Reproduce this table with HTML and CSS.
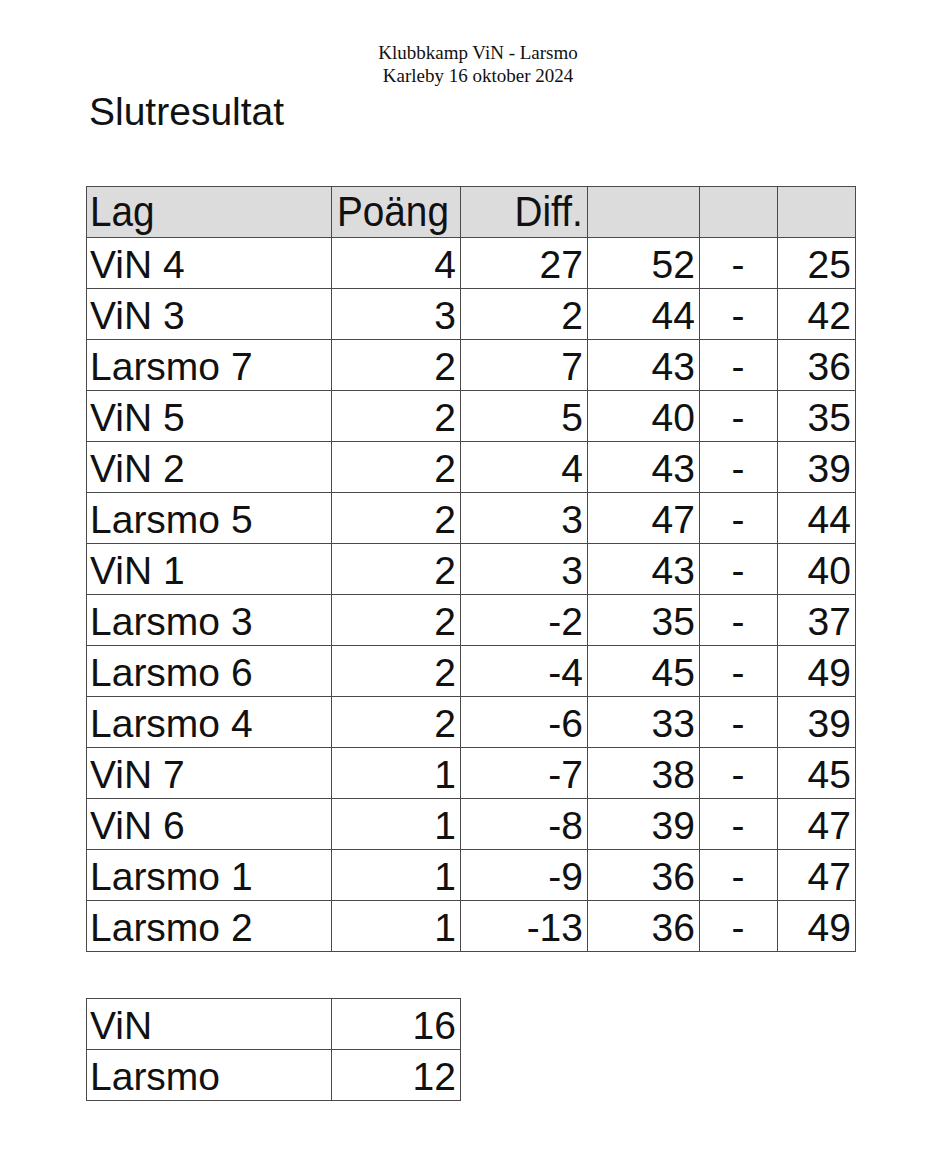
FILE: index.html
```html
<!DOCTYPE html>
<html lang="sv">
<head>
<meta charset="utf-8">
<title>Klubbkamp ViN - Larsmo</title>
<link rel="stylesheet" href="styles.css">
</head>
<body>
<div class="page">
  <header class="doc-head">
    <div class="event">Klubbkamp ViN - Larsmo</div>
    <div class="event">Karleby 16 oktober 2024</div>
  </header>
  <h1 class="title">Slutresultat</h1>

  <table class="results">
    <colgroup>
      <col class="c-lag"><col class="c-p"><col class="c-d"><col class="c-a"><col class="c-s"><col class="c-b">
    </colgroup>
    <thead>
      <tr><th><span class="nar">Lag</span></th><th class="pl"><span class="nar">Poäng</span></th><th class="r"><span class="nar">Diff.</span></th><th></th><th></th><th></th></tr>
    </thead>
    <tbody>
      <tr><td>ViN 4</td><td class="r">4</td><td class="r">27</td><td class="r">52</td><td class="c">-</td><td class="r">25</td></tr>
      <tr><td>ViN 3</td><td class="r">3</td><td class="r">2</td><td class="r">44</td><td class="c">-</td><td class="r">42</td></tr>
      <tr><td>Larsmo 7</td><td class="r">2</td><td class="r">7</td><td class="r">43</td><td class="c">-</td><td class="r">36</td></tr>
      <tr><td>ViN 5</td><td class="r">2</td><td class="r">5</td><td class="r">40</td><td class="c">-</td><td class="r">35</td></tr>
      <tr><td>ViN 2</td><td class="r">2</td><td class="r">4</td><td class="r">43</td><td class="c">-</td><td class="r">39</td></tr>
      <tr><td>Larsmo 5</td><td class="r">2</td><td class="r">3</td><td class="r">47</td><td class="c">-</td><td class="r">44</td></tr>
      <tr><td>ViN 1</td><td class="r">2</td><td class="r">3</td><td class="r">43</td><td class="c">-</td><td class="r">40</td></tr>
      <tr><td>Larsmo 3</td><td class="r">2</td><td class="r">-2</td><td class="r">35</td><td class="c">-</td><td class="r">37</td></tr>
      <tr><td>Larsmo 6</td><td class="r">2</td><td class="r">-4</td><td class="r">45</td><td class="c">-</td><td class="r">49</td></tr>
      <tr><td>Larsmo 4</td><td class="r">2</td><td class="r">-6</td><td class="r">33</td><td class="c">-</td><td class="r">39</td></tr>
      <tr><td>ViN 7</td><td class="r">1</td><td class="r">-7</td><td class="r">38</td><td class="c">-</td><td class="r">45</td></tr>
      <tr><td>ViN 6</td><td class="r">1</td><td class="r">-8</td><td class="r">39</td><td class="c">-</td><td class="r">47</td></tr>
      <tr><td>Larsmo 1</td><td class="r">1</td><td class="r">-9</td><td class="r">36</td><td class="c">-</td><td class="r">47</td></tr>
      <tr><td>Larsmo 2</td><td class="r">1</td><td class="r">-13</td><td class="r">36</td><td class="c">-</td><td class="r">49</td></tr>
    </tbody>
  </table>

  <table class="totals">
    <colgroup><col class="c-lag"><col class="c-p"></colgroup>
    <tbody>
      <tr><td>ViN</td><td class="r">16</td></tr>
      <tr><td>Larsmo</td><td class="r">12</td></tr>
    </tbody>
  </table>
</div>
</body>
</html>
```

FILE: styles.css
```css
html, body {
  margin: 0;
  padding: 0;
  background: #ffffff;
}

.page {
  padding: 41px 0 0 86px;
  color: #111;
}

.doc-head {
  width: 784px;
  text-align: center;
  font-family: "Liberation Serif", "Times New Roman", serif;
  font-size: 19px;
  line-height: 23px;
}

.title {
  margin: 2px 0 0 3px;
  font-family: "Liberation Sans", Arial, sans-serif;
  font-weight: normal;
  font-size: 39px;
  line-height: 46px;
}

table {
  border-collapse: collapse;
  font-family: "Liberation Sans", Arial, sans-serif;
  font-size: 39px;
  table-layout: fixed;
}

.results {
  margin-top: 51px;
  width: 770px;
}

.totals {
  margin-top: 46px;
  width: 375px;
}

.c-lag { width: 245px; }
.c-p { width: 129px; }
.c-d { width: 127px; }
.c-a { width: 112px; }
.c-s { width: 78px; }
.c-b { width: 78px; }

th, td {
  border: 1px solid #4a4a4a;
  height: 51px;
  padding: 0 4px 1px 3px;
  box-sizing: border-box;
  white-space: nowrap;
  overflow: hidden;
  line-height: 44px;
  vertical-align: bottom;
  text-align: left;
}

th {
  background: #dcdcdc;
  font-weight: normal;
  font-size: 43px;
  padding-bottom: 4px;
}

th.pl {
  padding-left: 5px;
}

.nar {
  display: inline-block;
  transform: scaleX(0.9);
  transform-origin: left center;
}

th.r .nar {
  transform-origin: right center;
}

.r { text-align: right; }
.c { text-align: center; }
```
